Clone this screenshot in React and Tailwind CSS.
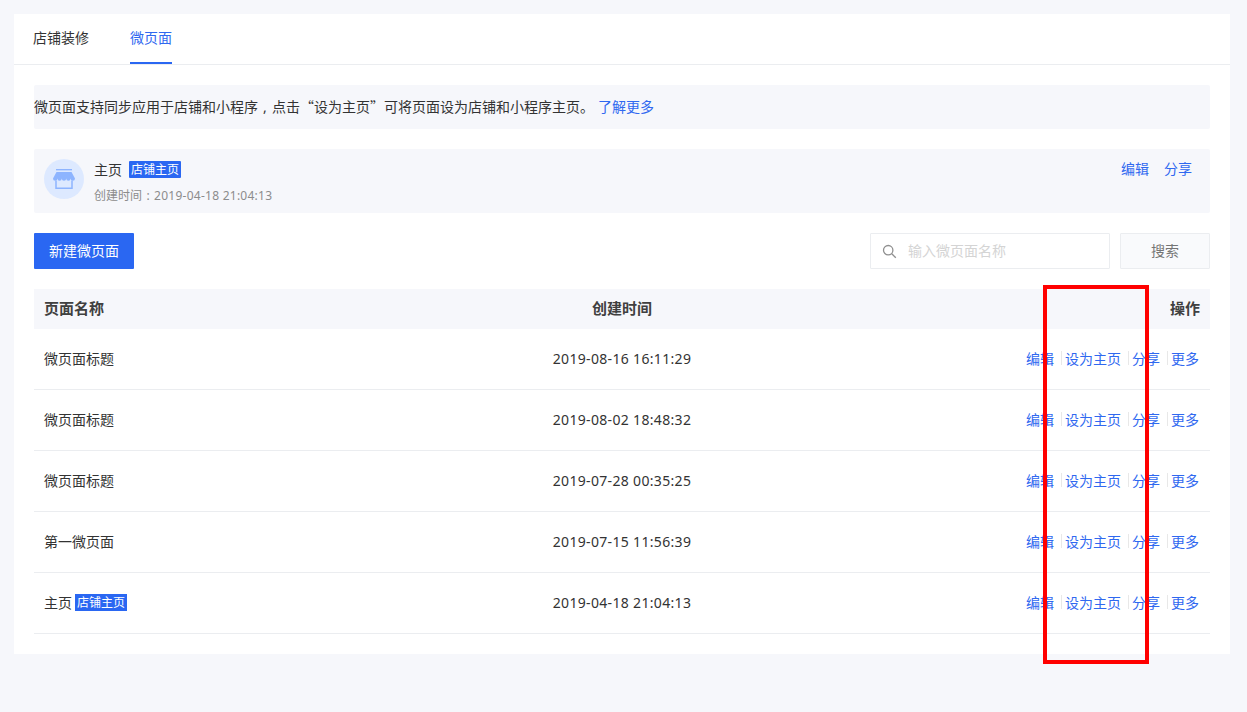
import React from "react";

const rows = [
  { name: "微页面标题", time: "2019-08-16 16:11:29" },
  { name: "微页面标题", time: "2019-08-02 18:48:32" },
  { name: "微页面标题", time: "2019-07-28 00:35:25" },
  { name: "第一微页面", time: "2019-07-15 11:56:39" },
  { name: "主页", time: "2019-04-18 21:04:13", home: true },
];

function Sep() {
  return <span className="ml-[7px] mr-[3px] inline-block h-[14px] w-px bg-[#e8e8e8]" />;
}

function StoreIcon() {
  return (
    <svg width="22" height="20" viewBox="0 0 22 20" fill="none">
      <path d="M3 0.600h16" stroke="#8db4ff" strokeWidth="1.500" />
      <path d="M3.500 3h15L22 9.500a2.200 2.200 0 0 1-4.400 0a2.200 2.200 0 0 1-4.400 0a2.200 2.200 0 0 1-4.400 0a2.200 2.200 0 0 1-4.400 0a2.200 2.200 0 0 1-4.400 0z" fill="#8db4ff" />
      <path d="M3 11.500v7.700h16v-7.700" stroke="#8db4ff" strokeWidth="1.500" />
    </svg>
  );
}

function Row({ r }) {
  return (
    <div className="grid h-[61px] grid-cols-[1fr_176px_1fr] items-center border-b border-[#ebedf0] pb-[2px] pl-[10px] pr-[10px] text-[14px] text-[#333]">
      <div className="flex items-center">
        <span>{r.name}</span>
        {r.home && (
          <span className="ml-[3px] bg-[#2a67f2] px-[2px] text-[12px] leading-[17px] text-white">店铺主页</span>
        )}
      </div>
      <div className="text-center tracking-[0.33px]">{r.time}</div>
      <div className="flex items-center justify-end pr-[1px] text-[#2f68f0]">
        <span>编辑</span>
        <Sep />
        <span>设为主页</span>
        <Sep />
        <span>分享</span>
        <Sep />
        <span>更多</span>
      </div>
    </div>
  );
}

export default function App() {
  return (
    <div className="relative min-h-[712px] bg-[#f6f7fb] pb-[58px] pl-[14px] pr-[17px] pt-[14px] font-['Noto_Sans','Noto_Sans_CJK_SC',sans-serif]">
      <div className="bg-white">
        <div className="flex h-[51px] gap-[41px] border-b border-[#ebedf0] px-[19px] text-[14px]">
          <div className="flex h-[50px] items-center pb-[4px] text-[#333]">店铺装修</div>
          <div className="flex h-[50px] items-center border-b-2 border-[#2a67f2] pb-[2px] text-[#2f68f0]">微页面</div>
        </div>
        <div className="px-[20px] pb-[20px] pt-[20px]">
          <div className="flex h-[44px] items-center whitespace-pre rounded-[2px] bg-[#f6f7fb] pb-[2px] font-['Noto_Sans_CJK_SC',sans-serif] text-[14px] text-[#333]">
            <span>
              微页面支持同步应用于店铺和小程序<span className="inline-block w-[14px] text-center font-['Noto_Sans',sans-serif]">,</span>点击“设为主页”可将页面设为店铺和小程序主页。
            </span>
            <span className="ml-[4px] text-[#2f68f0]">了解更多</span>
          </div>
          <div className="mt-[20px] flex h-[64px] items-start rounded-[2px] bg-[#f6f7fb] pl-[10px] pr-[18px]">
            <div className="mt-[10px] flex h-[40px] w-[40px] items-center justify-center rounded-full bg-[#dde9ff]">
              <StoreIcon />
            </div>
            <div className="ml-[10px] pt-[9px]">
              <div className="flex h-[22px] items-center text-[14px] text-[#333]">
                <span>主页</span>
                <span className="ml-[7px] rounded-[1px] bg-[#2a67f2] px-[2px] text-[12px] leading-[17px] text-white">店铺主页</span>
              </div>
              <div className="mt-[6px] text-[12px] leading-[20px] text-[#8c8c8c]">
                创建时间<span className="inline-block w-[12px] text-center">:</span>
                <span className="tracking-[0.26px]">2019-04-18 21:04:13</span>
              </div>
            </div>
            <div className="ml-auto mt-[9px] flex gap-[15px] text-[14px] leading-[22px] text-[#2f68f0]">
              <span>编辑</span>
              <span>分享</span>
            </div>
          </div>
          <div className="mt-[20px] flex h-[36px] items-center">
            <button className="h-[36px] w-[100px] rounded-[1px] bg-[#2a67f2] pb-[2px] text-[14px] text-white">新建微页面</button>
            <div className="ml-auto flex h-[36px] w-[240px] items-center rounded-[1px] border border-[#ebedf0] pb-[2px] pl-[11px] text-[14px] text-[#d4d4d4]">
              <svg className="mt-[2px]" width="15" height="15" viewBox="0 0 15 15" fill="none" stroke="#8f8f8f" strokeWidth="1.300">
                <circle cx="6.200" cy="6.200" r="4.700" />
                <path d="M9.800 9.800l4 4" />
              </svg>
              <span className="ml-[11px]">输入微页面名称</span>
            </div>
            <button className="ml-[10px] h-[36px] w-[90px] rounded-[1px] border border-[#ebedf0] bg-[#f9fafc] pb-[2px] text-[14px] text-[#757575]">搜索</button>
          </div>
          <div className="mt-[20px]">
            <div className="grid h-[40px] grid-cols-[1fr_176px_1fr] items-center bg-[#f6f7fb] pb-[2px] pl-[10px] pr-[10px] text-[15px] font-bold text-[#404040]">
              <div>页面名称</div>
              <div className="text-center">创建时间</div>
              <div className="text-right">操作</div>
            </div>
            {rows.map((r, i) => (
              <Row key={i} r={r} />
            ))}
          </div>
        </div>
      </div>
      <div className="absolute left-[1043px] top-[285px] h-[379px] w-[106px] border-[4px] border-[#ff0000]" />
    </div>
  );
}
